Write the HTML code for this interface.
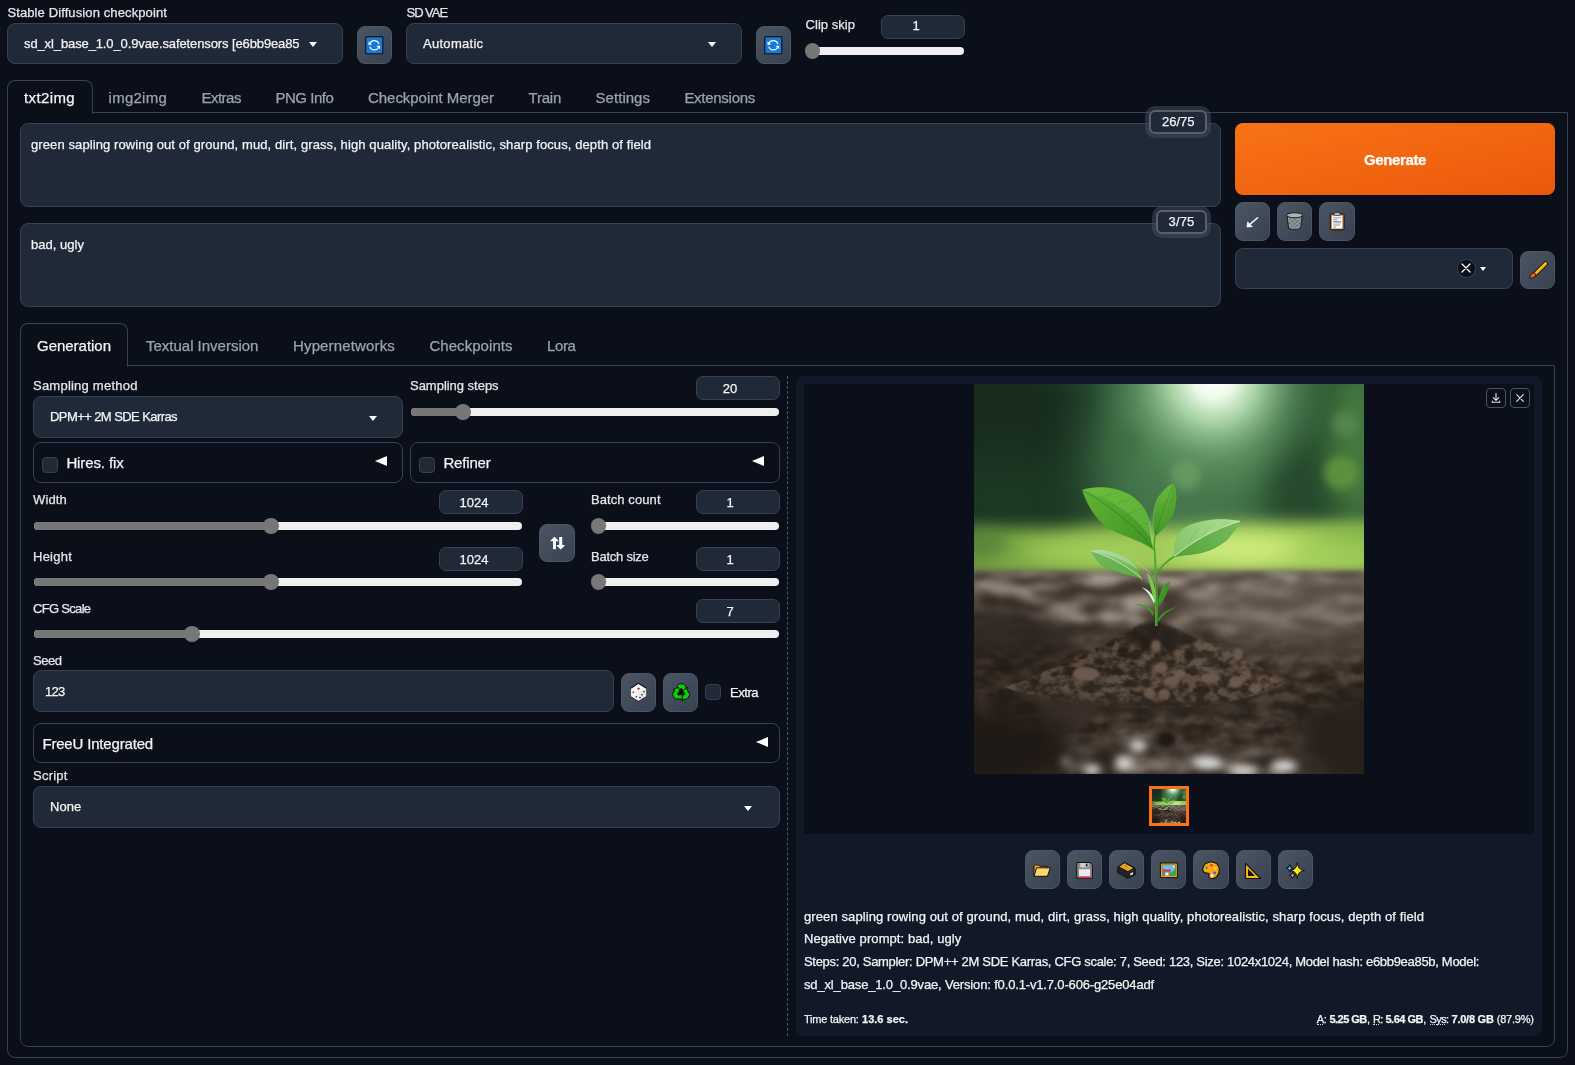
<!DOCTYPE html>
<html><head><meta charset="utf-8"><title>Stable Diffusion</title>
<style>
*{box-sizing:border-box;margin:0;padding:0}
html,body{width:1575px;height:1065px;overflow:hidden;background:#0b0f19;font-family:"Liberation Sans",sans-serif;}
body{position:relative}
.a{position:absolute}
.t{position:absolute;white-space:pre;font-family:"Liberation Sans",sans-serif;-webkit-text-stroke:0.25px currentColor;}
.tl{position:absolute;left:0;top:0;width:1575px;height:1065px;will-change:transform}
.box{position:absolute;background:#1f2937;border:1px solid #374151;border-radius:8px}
.acc{position:absolute;background:#0b0f19;border:1px solid #374151;border-radius:8px}
.num{position:absolute;background:#1f2937;border:1px solid #374151;border-radius:7px}
.btn{position:absolute;border-radius:8px;background:linear-gradient(to bottom right,#4b5563,#374151);border:1px solid #4b5563}
.trk{position:absolute;height:8px;border-radius:4px;background:#efefef}
.fil{position:absolute;height:8px;border-radius:4px;background:#777}
.thm{position:absolute;width:15.6px;height:15.6px;margin:-0.3px 0 0 -0.3px;border-radius:50%;background:#777}
.chk{position:absolute;width:16px;height:16px;border-radius:4px;background:#1f2937;border:1px solid #374151}
.tri{position:absolute;width:0;height:0;border-left:4px solid transparent;border-right:4px solid transparent;border-top:5px solid #fff}
.ltri{position:absolute;width:0;height:0;border-top:5.8px solid transparent;border-bottom:5.8px solid transparent;border-right:12.4px solid #fff}

</style></head>
<body>
<!-- outer tab panel -->
<div class="a" style="left:7px;top:112px;width:1561px;height:946px;border:1px solid #374151;border-radius:0 0 8px 8px"></div>
<!-- txt2img tab -->
<div class="a" style="left:7px;top:80px;width:86px;height:34px;border:1px solid #374151;border-bottom:none;border-radius:8px 8px 0 0;background:#0b0f19"></div>
<!-- inner tab panel -->
<div class="a" style="left:20px;top:365px;width:1535px;height:682px;border:1px solid #374151;border-radius:0 0 8px 8px"></div>
<div class="a" style="left:20px;top:323px;width:108px;height:44px;border:1px solid #374151;border-bottom:none;border-radius:8px 8px 0 0;background:#0b0f19"></div>

<!-- top row -->
<div class="box" style="left:7px;top:23px;width:336px;height:41px"></div>
<div class="tri" style="left:309px;top:42px"></div>
<div class="btn" style="left:357px;top:26px;width:35px;height:38px"></div>
<div class="box" style="left:406px;top:23px;width:336px;height:41px"></div>
<div class="tri" style="left:708px;top:42px"></div>
<div class="btn" style="left:756px;top:26px;width:35px;height:38px"></div>
<div class="num" style="left:881px;top:15px;width:84px;height:24px"></div>
<div class="trk" style="left:806px;top:47px;width:158px"></div>
<div class="thm" style="left:805px;top:43.5px"></div>

<!-- prompts -->
<div class="box" style="left:20px;top:123px;width:1201px;height:84px"></div>
<div class="box" style="left:20px;top:223px;width:1201px;height:84px"></div>
<div class="a" style="left:1149px;top:109.5px;width:58px;height:24px;border:2px solid #566070;border-radius:6px;background:#1f2937;box-shadow:0 0 0 4px rgba(75,85,99,.45)"></div>
<div class="a" style="left:1156px;top:209.5px;width:51px;height:24px;border:2px solid #566070;border-radius:6px;background:#1f2937;box-shadow:0 0 0 4px rgba(75,85,99,.45)"></div>

<!-- generate -->
<div class="a" style="left:1235px;top:123px;width:320px;height:72px;border-radius:8px;background:linear-gradient(to bottom right,#f97316,#ea580c)"></div>
<div class="btn" style="left:1235px;top:202px;width:35px;height:39px"></div>
<div class="btn" style="left:1277px;top:202px;width:35px;height:39px"></div>
<div class="btn" style="left:1319px;top:202px;width:36px;height:39px"></div>
<div class="box" style="left:1235px;top:248px;width:278px;height:41px"></div>
<div class="a" style="left:1456.5px;top:258.5px;width:19px;height:19px;border-radius:50%;background:#0b0f19;border:1px solid #374151"></div>
<div class="tri" style="left:1480px;top:266.5px;border-left-width:3.7px;border-right-width:3.7px;border-top-width:4.5px"></div>
<div class="btn" style="left:1520px;top:251px;width:35px;height:38px"></div>

<!-- left column -->
<div class="box" style="left:33px;top:396px;width:370px;height:42px"></div>
<div class="tri" style="left:369px;top:415.5px"></div>
<div class="trk" style="left:411px;top:408px;width:368px"></div>
<div class="fil" style="left:411px;top:408px;width:54px"></div>
<div class="thm" style="left:455.5px;top:404.5px"></div>
<div class="num" style="left:696px;top:376px;width:84px;height:24px"></div>

<div class="acc" style="left:33px;top:442px;width:370px;height:41px"></div>
<div class="chk" style="left:42px;top:457px"></div>
<div class="ltri" style="left:375px;top:456px"></div>
<div class="acc" style="left:410px;top:442px;width:370px;height:41px"></div>
<div class="chk" style="left:419px;top:457px"></div>
<div class="ltri" style="left:752px;top:456px"></div>

<div class="num" style="left:439px;top:490px;width:84px;height:24px"></div>
<div class="trk" style="left:34px;top:522px;width:488px"></div>
<div class="fil" style="left:34px;top:522px;width:240px"></div>
<div class="thm" style="left:263.5px;top:518.5px"></div>
<div class="num" style="left:439px;top:547px;width:84px;height:24px"></div>
<div class="trk" style="left:34px;top:578px;width:488px"></div>
<div class="fil" style="left:34px;top:578px;width:240px"></div>
<div class="thm" style="left:263.5px;top:574.5px"></div>
<div class="btn" style="left:539px;top:524px;width:36px;height:38px"></div>

<div class="num" style="left:696px;top:490px;width:84px;height:24px"></div>
<div class="trk" style="left:592px;top:522px;width:187px"></div>
<div class="thm" style="left:591px;top:518.5px"></div>
<div class="num" style="left:696px;top:547px;width:84px;height:24px"></div>
<div class="trk" style="left:592px;top:578px;width:187px"></div>
<div class="thm" style="left:591px;top:574.5px"></div>

<div class="num" style="left:696px;top:599px;width:84px;height:24px"></div>
<div class="trk" style="left:34px;top:630px;width:745px"></div>
<div class="fil" style="left:34px;top:630px;width:160px"></div>
<div class="thm" style="left:184.5px;top:626.5px"></div>

<div class="box" style="left:33px;top:670px;width:581px;height:42px"></div>
<div class="btn" style="left:621px;top:673px;width:35px;height:39px"></div>
<div class="btn" style="left:663px;top:673px;width:35px;height:39px"></div>
<div class="chk" style="left:705px;top:684px"></div>

<div class="acc" style="left:33px;top:723px;width:747px;height:40px"></div>
<div class="ltri" style="left:756px;top:737px"></div>
<div class="box" style="left:33px;top:786px;width:747px;height:42px"></div>
<div class="tri" style="left:744px;top:805.5px"></div>

<!-- dashed divider -->
<div class="a" style="left:787px;top:376px;width:0;height:660px;border-left:1px dashed #4b5563"></div>

<!-- results panel -->
<div class="a" style="left:796px;top:376px;width:746px;height:660px;border-radius:8px;background:#111827"></div>
<div class="a" style="left:804px;top:384px;width:730px;height:450px;background:#0b0f19"></div>
<div class="a" style="left:1486px;top:388px;width:20px;height:20px;border:1px solid #4b5563;border-radius:4px"></div>
<div class="a" style="left:1510px;top:388px;width:20px;height:20px;border:1px solid #4b5563;border-radius:4px"></div>
<!-- tool buttons -->
<div class="btn" style="left:1025px;top:850px;width:35px;height:39px"></div>
<div class="btn" style="left:1067px;top:850px;width:35px;height:39px"></div>
<div class="btn" style="left:1109px;top:850px;width:35px;height:39px"></div>
<div class="btn" style="left:1151px;top:850px;width:35px;height:39px"></div>
<div class="btn" style="left:1193px;top:850px;width:36px;height:39px"></div>
<div class="btn" style="left:1236px;top:850px;width:35px;height:39px"></div>
<div class="btn" style="left:1278px;top:850px;width:35px;height:39px"></div>

<svg width="0" height="0" style="position:absolute">
<defs>
<filter id="bl40" filterUnits="userSpaceOnUse" x="-120" y="-120" width="630" height="630" color-interpolation-filters="sRGB"><feGaussianBlur stdDeviation="28"/></filter>
<filter id="bl20" filterUnits="userSpaceOnUse" x="-120" y="-120" width="630" height="630" color-interpolation-filters="sRGB"><feGaussianBlur stdDeviation="14"/></filter>
<filter id="bl10" filterUnits="userSpaceOnUse" x="-120" y="-120" width="630" height="630" color-interpolation-filters="sRGB"><feGaussianBlur stdDeviation="8"/></filter>
<filter id="bl5" filterUnits="userSpaceOnUse" x="-120" y="-120" width="630" height="630" color-interpolation-filters="sRGB"><feGaussianBlur stdDeviation="4"/></filter>
<filter id="bl2" filterUnits="userSpaceOnUse" x="-120" y="-120" width="630" height="630" color-interpolation-filters="sRGB"><feGaussianBlur stdDeviation="2"/></filter>
<filter id="bl1" filterUnits="userSpaceOnUse" x="-120" y="-120" width="630" height="630" color-interpolation-filters="sRGB"><feGaussianBlur stdDeviation="0.9"/></filter>
<radialGradient id="glow" cx="240" cy="-6" r="125" gradientUnits="userSpaceOnUse">
 <stop offset="0" stop-color="#ffffff"/><stop offset="0.16" stop-color="#eefbea"/><stop offset="0.36" stop-color="#b9e2b4" stop-opacity=".85"/><stop offset="0.65" stop-color="#7fb57f" stop-opacity=".4"/><stop offset="1" stop-color="#4f8a55" stop-opacity="0"/></radialGradient>
<linearGradient id="soil" x1="0" y1="186" x2="0" y2="390" gradientUnits="userSpaceOnUse">
 <stop offset="0" stop-color="#746a61"/><stop offset="0.2" stop-color="#5d5148"/><stop offset="0.55" stop-color="#3a2f28"/><stop offset="1" stop-color="#2a221d"/></linearGradient>
<linearGradient id="band" x1="0" y1="0" x2="390" y2="0" gradientUnits="userSpaceOnUse">
 <stop offset="0" stop-color="#6f9c40"/><stop offset="0.3" stop-color="#93c150"/><stop offset="0.7" stop-color="#b4da66"/><stop offset="1" stop-color="#9bc755"/></linearGradient>
<linearGradient id="lfA" x1="108" y1="106" x2="180" y2="160" gradientUnits="userSpaceOnUse"><stop offset="0" stop-color="#62b432"/><stop offset="1" stop-color="#3f9425"/></linearGradient>
<linearGradient id="lfB" x1="200" y1="170" x2="266" y2="137" gradientUnits="userSpaceOnUse"><stop offset="0" stop-color="#5aa93a"/><stop offset="0.6" stop-color="#8ccb6c"/><stop offset="1" stop-color="#a5d88a"/></linearGradient>
<linearGradient id="lfC" x1="117" y1="166" x2="168" y2="193" gradientUnits="userSpaceOnUse"><stop offset="0" stop-color="#a4d490"/><stop offset="1" stop-color="#5fae44"/></linearGradient>
<linearGradient id="lfD" x1="199" y1="99" x2="182" y2="150" gradientUnits="userSpaceOnUse"><stop offset="0" stop-color="#6dbb3e"/><stop offset="1" stop-color="#3f9427"/></linearGradient>
<filter id="soilFar" x="0" y="0" width="100%" height="100%" color-interpolation-filters="sRGB">
 <feTurbulence type="fractalNoise" baseFrequency="0.028 0.075" numOctaves="2" seed="11"/>
 <feColorMatrix type="matrix" values="3 0 0 0 -1  3 0 0 0 -1  3 0 0 0 -1  0 0 0 0 1"/>
 <feComponentTransfer><feFuncR type="table" tableValues="0.20 0.29 0.40 0.52 0.68"/><feFuncG type="table" tableValues="0.165 0.245 0.35 0.47 0.63"/><feFuncB type="table" tableValues="0.14 0.21 0.31 0.43 0.59"/></feComponentTransfer>
 <feGaussianBlur stdDeviation="3"/>
</filter>
<filter id="soilNear" x="0" y="0" width="100%" height="100%" color-interpolation-filters="sRGB">
 <feTurbulence type="fractalNoise" baseFrequency="0.05 0.10" numOctaves="4" seed="5"/>
 <feColorMatrix type="matrix" values="2.4 0 0 0 -0.7  2.4 0 0 0 -0.7  2.4 0 0 0 -0.7  0 0 0 0 1"/>
 <feComponentTransfer><feFuncR type="table" tableValues="0.11 0.155 0.21 0.275 0.35"/><feFuncG type="table" tableValues="0.088 0.124 0.168 0.222 0.29"/><feFuncB type="table" tableValues="0.07 0.098 0.135 0.18 0.24"/></feComponentTransfer>
 <feGaussianBlur stdDeviation="0.9"/>
</filter>
<filter id="soilMound" x="0" y="0" width="100%" height="100%" color-interpolation-filters="sRGB">
 <feTurbulence type="fractalNoise" baseFrequency="0.09 0.12" numOctaves="4" seed="21" result="n"/>
 <feColorMatrix in="n" type="matrix" values="3 0 0 0 -1  3 0 0 0 -1  3 0 0 0 -1  0 0 0 0 1"/>
 <feComponentTransfer><feFuncR type="table" tableValues="0.14 0.20 0.28 0.36 0.44"/><feFuncG type="table" tableValues="0.11 0.16 0.23 0.30 0.37"/><feFuncB type="table" tableValues="0.085 0.13 0.185 0.25 0.31"/></feComponentTransfer>
 <feGaussianBlur stdDeviation="0.5" result="c"/>
 <feComposite in="c" in2="SourceGraphic" operator="in"/>
</filter>
<linearGradient id="gFar" x1="0" y1="184" x2="0" y2="390" gradientUnits="userSpaceOnUse"><stop offset="0" stop-color="#fff" stop-opacity="0"/><stop offset="0.05" stop-color="#fff" stop-opacity=".85"/><stop offset="0.24" stop-color="#fff" stop-opacity=".8"/><stop offset="0.42" stop-color="#fff" stop-opacity="0.1"/><stop offset="0.8" stop-color="#fff" stop-opacity="0.5"/><stop offset="1" stop-color="#fff" stop-opacity=".8"/></linearGradient>
<linearGradient id="gNear" x1="0" y1="184" x2="0" y2="390" gradientUnits="userSpaceOnUse"><stop offset="0" stop-color="#fff" stop-opacity="0"/><stop offset="0.25" stop-color="#fff" stop-opacity="0"/><stop offset="0.45" stop-color="#fff" stop-opacity=".85"/><stop offset="0.75" stop-color="#fff" stop-opacity=".7"/><stop offset="1" stop-color="#fff" stop-opacity="0"/></linearGradient>
<mask id="mFar" maskUnits="userSpaceOnUse" x="0" y="184" width="390" height="206"><rect x="0" y="184" width="390" height="206" fill="url(#gFar)"/></mask>
<mask id="mNear" maskUnits="userSpaceOnUse" x="0" y="184" width="390" height="206"><rect x="0" y="184" width="390" height="206" fill="url(#gNear)"/></mask>
<clipPath id="pc"><rect width="390" height="390"/></clipPath>
<symbol id="pic" viewBox="0 0 390 390">
<g clip-path="url(#pc)">
 <rect width="390" height="200" fill="#2a5332"/>
 <ellipse cx="20" cy="70" rx="110" ry="140" fill="#182c1e" filter="url(#bl40)"/>
 <ellipse cx="40" cy="120" rx="90" ry="50" fill="#1d3a24" filter="url(#bl40)"/>
 <ellipse cx="215" cy="80" rx="95" ry="100" fill="#46794d" filter="url(#bl40)"/>
 <ellipse cx="330" cy="120" rx="35" ry="70" fill="#274a2d" filter="url(#bl20)"/>
 <ellipse cx="385" cy="60" rx="30" ry="80" fill="#45783f" filter="url(#bl20)"/>
 <rect x="90" y="-20" width="300" height="170" fill="url(#glow)"/>
 <circle cx="371" cy="40" r="13" fill="#5b8d56" opacity=".7" filter="url(#bl5)"/>
 <circle cx="367" cy="89" r="17" fill="#65993f" opacity=".8" filter="url(#bl5)"/>
 <circle cx="212" cy="91" r="15" fill="#6fa267" opacity=".7" filter="url(#bl5)"/>
 <circle cx="150" cy="60" r="18" fill="#3a6a41" opacity=".6" filter="url(#bl10)"/>
 <!-- green band -->
 <path d="M-20 150 C20 140 60 146 100 143 C150 139 190 147 230 141 C280 136 330 140 410 138 L410 190 L-20 190Z" fill="url(#band)" filter="url(#bl10)"/>
 <rect x="-20" y="158" width="430" height="30" fill="url(#band)" filter="url(#bl5)"/>
 <ellipse cx="262" cy="165" rx="60" ry="10" fill="#d6f084" opacity=".85" filter="url(#bl10)"/>
 <ellipse cx="110" cy="168" rx="60" ry="9" fill="#abd45e" opacity=".7" filter="url(#bl10)"/>
 <ellipse cx="0" cy="158" rx="34" ry="16" fill="#55823a" opacity=".85" filter="url(#bl10)"/>
 <ellipse cx="380" cy="150" rx="40" ry="8" fill="#7fb04a" opacity=".6" filter="url(#bl10)"/>
 <!-- soil -->
 <rect x="-20" y="187" width="430" height="224" fill="url(#soil)" filter="url(#bl5)"/>
 <rect x="0" y="184" width="390" height="206" filter="url(#soilFar)" mask="url(#mFar)"/>
 <rect x="0" y="184" width="390" height="206" filter="url(#soilNear)" mask="url(#mNear)"/>
 <ellipse cx="310" cy="218" rx="110" ry="26" fill="#7a6f66" opacity=".45" filter="url(#bl10)"/>
 <ellipse cx="40" cy="250" rx="60" ry="24" fill="#2a221c" opacity=".55" filter="url(#bl10)"/>
 <ellipse cx="350" cy="265" rx="40" ry="16" fill="#3a3029" opacity=".5" filter="url(#bl10)"/>
 <ellipse cx="20" cy="300" rx="90" ry="90" fill="#241d18" opacity=".45" filter="url(#bl20)"/>
 <ellipse cx="330" cy="250" rx="80" ry="40" fill="#6a5d53" opacity=".35" filter="url(#bl20)"/>
 <!-- mound -->
 <g filter="url(#bl1)">
 <path d="M30 303 C70 292 100 270 128 262 C140 254 150 250 158 246 C166 240 174 238 181 237 C190 238 196 242 204 246 C214 250 224 256 238 260 C262 270 285 285 318 298 C270 318 230 324 185 324 C130 324 70 318 30 303Z" fill="#463a31"/>
 <path d="M181 237 C190 238 196 242 204 246 C214 250 224 256 238 260 C262 270 285 285 318 298 C285 302 250 298 222 288 C204 278 190 262 181 237Z" fill="#574a40" opacity=".8"/>
 <path d="M181 237 C172 240 164 244 156 248 C146 252 138 256 128 262 C104 270 80 288 50 300 C90 304 125 300 148 290 C164 280 176 262 181 237Z" fill="#352b24" opacity=".8"/>
 </g>
 <path d="M30 303 C70 292 100 270 128 262 C140 254 150 250 158 246 C166 240 174 238 181 237 C190 238 196 242 204 246 C214 250 224 256 238 260 C262 270 285 285 318 298 C270 318 230 324 185 324 C130 324 70 318 30 303Z" filter="url(#soilMound)" opacity=".6"/>
 <path d="M181 236.500 C190 238 196 242 204 246 C210 249 216 252 222 255 C214 262 200 266 186 266 C170 266 156 260 146 253 C150 250 154 248 158 246 C166 240 174 238 181 236.500Z" fill="#261f1a" opacity=".85" filter="url(#bl2)"/>
 <g filter="url(#bl1)" fill="#6a594c">
  <ellipse cx="187" cy="284" rx="7" ry="5"/><ellipse cx="198" cy="297" rx="8" ry="5"/><ellipse cx="176" cy="310" rx="6" ry="5"/><ellipse cx="190" cy="311" rx="6" ry="6"/>
  <ellipse cx="206" cy="290" rx="6" ry="5"/><ellipse cx="236" cy="294" rx="10" ry="5"/><ellipse cx="112" cy="290" rx="13" ry="7"/><ellipse cx="262" cy="298" rx="7" ry="6"/>
  <ellipse cx="182" cy="262" rx="5" ry="6"/><ellipse cx="264" cy="270" rx="5" ry="6"/><ellipse cx="282" cy="305" rx="6" ry="4"/>
 </g>
 <g filter="url(#bl1)" fill="#261e19" opacity=".8">
  <ellipse cx="170" cy="262" rx="3.500" ry="8" transform="rotate(15 170 262)"/><ellipse cx="196" cy="266" rx="3.500" ry="7" transform="rotate(-15 196 266)"/><ellipse cx="215" cy="272" rx="4" ry="6" transform="rotate(-20 215 272)"/><ellipse cx="148" cy="268" rx="4" ry="6" transform="rotate(25 148 268)"/>
  <ellipse cx="228" cy="306" rx="9" ry="3.500"/><ellipse cx="158" cy="300" rx="8" ry="4"/><ellipse cx="250" cy="282" rx="6" ry="3"/><ellipse cx="125" cy="278" rx="6" ry="3"/>
  <ellipse cx="196" cy="320" rx="14" ry="3"/>
 </g>
 <ellipse cx="180" cy="324" rx="120" ry="7" fill="#2e2620" opacity=".7" filter="url(#bl5)"/>
 <!-- foreground -->
 <ellipse cx="95" cy="328" rx="32" ry="15" fill="#3c312a" opacity=".8" filter="url(#bl5)"/>
 <ellipse cx="20" cy="368" rx="80" ry="42" fill="#1f1915" filter="url(#bl20)"/>
 <ellipse cx="375" cy="358" rx="55" ry="48" fill="#27201b" filter="url(#bl20)"/>
 <ellipse cx="193" cy="355" rx="9" ry="8" fill="#1f1915" filter="url(#bl2)"/>
 <ellipse cx="130" cy="374" rx="12" ry="10" fill="#2a231d" filter="url(#bl5)"/>
 <g filter="url(#bl5)" fill="#e0e0e0">
  <ellipse cx="164" cy="362" rx="8" ry="6"/><ellipse cx="150" cy="379" rx="9" ry="6"/><ellipse cx="233" cy="379" rx="15" ry="6"/>
  <ellipse cx="310" cy="382" rx="13" ry="6"/><ellipse cx="270" cy="387" rx="14" ry="5"/><ellipse cx="118" cy="386" rx="9" ry="5"/><ellipse cx="92" cy="377" rx="5" ry="4" opacity=".6"/>
 </g>
 <!-- plant -->
 <g>
  <!-- stem -->
  <path d="M181 242 C181.200 225 181.300 205 180.600 188 C180.300 178 180 170 179.500 164 L181.300 164 C182 172 182.600 180 183 190 C183.600 206 183.800 226 183.600 242Z" fill="#52ad2c"/>
  <path d="M182.600 242 C182.800 225 182.800 205 182.200 188" stroke="#3a8f22" stroke-width="0.900" fill="none"/>
  <!-- petiole right -->
  <path d="M182.500 189.500 C187 183 193 177 200 172.500" stroke="#4a9d31" stroke-width="1.700" fill="none" stroke-linecap="round"/>
  <!-- petiole top -->
  <path d="M180.300 166 C180.200 160 180.300 156 181 152" stroke="#4a9d31" stroke-width="1.500" fill="none"/>
  <!-- big left leaf -->
  <path d="M179.300 166 C176 163 173 161.500 169 159.500 C160 155 147 151 136 145 C125 139 114 124 108 106 C117 103 127 102.500 136 104 C146 105.500 154 109 160 113.500 C168 120 173 127 175 135 C176.500 142 176.200 150 177.500 156 C178 160 178.800 163 179.300 166Z" fill="url(#lfA)"/>
  <path d="M108 106 C117 103 127 102.500 136 104 C146 105.500 154 109 160 113.500 C168 120 173 127 175 135 C176.500 142 176.200 150 177 155 C165 135 140 115 108 106Z" fill="#78c648" opacity=".5"/>
  <path d="M108 106 C130 118 158 138 178.500 164" stroke="#2c7a1c" stroke-width="0.900" fill="none" opacity=".75"/>
  <path d="M125 115 C130 112 136 110 142 109 M138 123 C144 119 150 116 157 115 M150 133 C156 129 162 126 168 125 M160 144 C165 141 170 139 175 139 M122 118 C123 124 125 130 128 135 M136 126 C137 133 140 139 144 144 M150 136 C152 142 155 147 159 151" stroke="#3e8f27" stroke-width="0.500" fill="none" opacity=".6"/>
  <path d="M175.500 137 C176.800 144 176.500 152 178.300 160" stroke="#a8e08a" stroke-width="0.800" fill="none" opacity=".8"/>
  <!-- top leaf -->
  <path d="M180.600 153 C179.500 148 178.800 142 179 136 C179.300 128 181 119 185.500 111.500 C189 106 194 101.500 199.700 99 C202 104 202.800 111 202 118 C201 125 199.500 129 198 132.500 C195 139 190 144 186 148 C184 150 182 151.500 180.600 153Z" fill="url(#lfD)"/>
  <path d="M199.700 99 C202 104 202.800 111 202 118 C201 125 199.500 129 198 132.500 C195 139 190 144 186 148 C192 132 196 116 199.700 99Z" fill="#4b9e2a" opacity=".55"/>
  <path d="M199.500 99.500 C193 116 186 136 181 152" stroke="#2f7d1e" stroke-width="0.700" fill="none" opacity=".7"/>
  <path d="M180.600 153 C179.500 148 178.800 142 179 136 C179.300 128 181 119 185.500 111.500" stroke="#9ad67a" stroke-width="0.600" fill="none" opacity=".7"/>
  <!-- right leaf -->
  <path d="M199.700 173 C199.500 166 200 160 202 154.500 C205 147 210 143 217 140.500 C224 138 232 136 240 135.500 C249 135 258 135.800 266.400 137 C264 143 260 148 255.500 153 C251 158 246 161 239.500 164.500 C233 167.500 227 169 220.500 170 C213 171 206 171.500 199.700 173Z" fill="url(#lfB)"/>
  <path d="M199.700 173 C199.500 166 200 160 202 154.500 C205 147 210 143 217 140.500 C224 138 232 136 240 135.500 C249 135 258 135.800 266.400 137 C245 143 222 155 199.700 173Z" fill="#b9e2a4" opacity=".45"/>
  <path d="M199.700 173 C222 155 245 143 266.400 137 C264 143 260 148 255.500 153 C251 158 246 161 239.500 164.500 C233 167.500 227 169 220.500 170 C213 171 206 171.500 199.700 173Z" fill="#4f9f35" opacity=".55"/>
  <path d="M200 172.500 C220 156 245 143 266 137.200" stroke="#eaf7e2" stroke-width="0.800" fill="none" opacity=".9"/>
  <path d="M215 161 C217 155 220 149 225 144 M228 154 C231 148 235 143 241 139 M243 147 C246 143 250 140 255 138.500 M214 163 C222 164 230 163 238 160 M230 153 C238 154 245 152 251 149" stroke="#5fa845" stroke-width="0.500" fill="none" opacity=".6"/>
  <path d="M199.700 173 C206 171.500 213 171 220.500 170 C227 169 233 167.500 239.500 164.500 C246 161 251 158 255.500 153" stroke="#4f9a36" stroke-width="0.700" fill="none" opacity=".7"/>
  <!-- lower left leaf -->
  <path d="M179.500 201 C176 198.500 172 197 168.600 195.300 C165 193.500 162 192.800 159 192 C153 190.600 148 189.800 143.500 188 C137 185.500 131 182.500 126.300 180 C122 177 119 172 116.700 166.600 C123 165.500 130 166 136 167.400 C143 169 150 172 155 175.400 C159 178.500 162 182 163.500 185.500 C165 189 167 192.500 168.600 195.300" fill="url(#lfC)"/>
  <path d="M116.700 166.600 C123 165.500 130 166 136 167.400 C143 169 150 172 155 175.400 C159 178.500 162 182 163.500 185.500 C150 176 135 170 116.700 166.600Z" fill="#c9e8bb" opacity=".5"/>
  <path d="M116.700 166.600 C135 172 155 183 168.600 195.300 C165 193.500 162 192.800 159 192 C153 190.600 148 189.800 143.500 188 C137 185.500 131 182.500 126.300 180 C122 177 119 172 116.700 166.600Z" fill="#58a53f" opacity=".6"/>
  <path d="M117 166.800 C135 172 155 183 168.500 195" stroke="#edf8e6" stroke-width="0.700" fill="none" opacity=".85"/>
  <path d="M126.300 180 C131 182.500 137 185.500 143.500 188 C148 189.800 153 190.600 159 192 C162 192.800 165 193.500 168.600 195.300" stroke="#4c9a34" stroke-width="0.700" fill="none" opacity=".7"/>
  <!-- sheath -->
  <path d="M180.500 218 C178 208 175.500 198 172.600 188.500 C175 190 178 195 180 201 C181.500 206 182 212 182 218Z" fill="#7cc653"/>
  <path d="M162.200 177.700 C167 181 172 185 176.600 189.700" stroke="#b7dc8f" stroke-width="0.700" fill="none" opacity=".9"/>
  <!-- mid right leaf -->
  <path d="M184.800 222 C184.300 214 186 207 189.500 202 C191.500 199.800 193.500 198.500 195.700 197.700 C195 203 193.300 208.500 191 213 C189.300 216.500 187 219.500 184.800 222Z" fill="#3f9a25"/>
  <path d="M195.700 197.700 C192 205 188 214 184.800 222" stroke="#2b7a1a" stroke-width="0.500" fill="none"/>
  <!-- whitish leaf -->
  <path d="M179.300 219 C177.500 213.500 173.500 207.500 167.800 203.300 C172 204.500 176 207.500 178.500 211.500 C180 214 180.300 216.500 180.500 219Z" fill="#e2f3da"/>
  <path d="M179.300 222 C177.500 217 175.500 214 173 212 C176 213.500 178.500 216 180.300 220Z" fill="#3f9a25"/>
  <!-- small left -->
  <path d="M179.300 227.500 C175.500 222.500 168 219.500 159 220 C165 220.500 170.500 222.500 174.500 226 C176.500 227.800 178 230 179.300 232.500Z" fill="#3d9823"/>
  <!-- small right -->
  <path d="M184 234.500 C188 228.500 195 224.500 202.600 223.200 C197 225.500 192.500 228.500 189 232 C187 234 185.500 236 184.300 238Z" fill="#3a9322"/>
 </g>
</g>
</symbol>
</defs></svg>
<svg class="a" style="left:974px;top:384px" width="390" height="390" viewBox="0 0 390 390"><use href="#pic" width="390" height="390"/></svg>
<div class="a" style="left:1149px;top:786px;width:40px;height:40px;background:#f97316"></div>
<svg class="a" style="left:1152px;top:789px" width="34" height="34" viewBox="0 0 390 390"><use href="#pic" width="390" height="390"/></svg>

<svg class="a" style="left:0;top:0;pointer-events:none" width="1575" height="1065" viewBox="0 0 1575 1065">
<defs>
 <g id="refresh">
  <rect x="-9" y="-9" width="18" height="18" rx="1" fill="#0a0a0a"/>
  <rect x="-8" y="-8" width="16" height="16" fill="#1979d9"/>
  <path d="M-4.500 -1.300 A4.700 4.700 0 0 1 4.500 -1.300" fill="none" stroke="#fff" stroke-width="1.150"/>
  <path d="M4.500 1.300 A4.700 4.700 0 0 1 -4.500 1.300" fill="none" stroke="#fff" stroke-width="1.150"/>
  <path d="M-5.800 -3.800 L-5.800 -0.200 L-2.200 -0.800Z" fill="#fff"/>
  <path d="M5.800 3.800 L5.800 0.200 L2.200 0.800Z" fill="#fff"/>
 </g>
</defs>
<use href="#refresh" transform="translate(374.300 45.300)"/>
<use href="#refresh" transform="translate(773.300 45.300)"/>

<!-- arrow down-left -->
<g stroke="#fff" stroke-width="1.500" stroke-linecap="round" fill="none">
 <path d="M1257.600 217.800 L1248 226"/>
</g>
<path d="M1247 227 L1247.600 221.800 L1249.600 224.200 L1252.400 226.600Z" fill="#fff" stroke="#fff" stroke-width="0.700" stroke-linejoin="round"/>

<!-- trash -->
<g>
 <path d="M1287 215.500 L1302.300 215.500 L1300.600 228.600 Q1294.600 231 1288.700 228.600Z" fill="#8b9a9b" stroke="#15181c" stroke-width="1"/>
 <ellipse cx="1294.650" cy="215.300" rx="8" ry="2.500" fill="#a9b5b6" stroke="#15181c" stroke-width="1"/>
 <g stroke="#4f5a5c" stroke-width="0.600" opacity=".9">
  <path d="M1289 219 L1300.500 228 M1288 222 L1297 229.500 M1292 217.500 L1301 224.500 M1300.500 219 L1289.500 228 M1301.500 222 L1292.500 229.500 M1297.500 217.500 L1288.300 224.500"/>
 </g>
</g>

<!-- clipboard -->
<g>
 <rect x="1330.300" y="214" width="13.700" height="15.800" rx="1" fill="#c98b57" stroke="#17120e" stroke-width="1"/>
 <rect x="1332" y="215.800" width="10.300" height="12.600" fill="#fbfbfb"/>
 <rect x="1334.300" y="212.700" width="5.700" height="2.600" rx="0.800" fill="#d8d8d8" stroke="#17120e" stroke-width="0.700"/>
 <g stroke="#8b8b8b" stroke-width="0.900"><path d="M1333.300 217.800 H1341 M1333.300 219.800 H1337.500 M1333.300 221.400 H1341 M1333.300 222.800 H1341 M1333.300 225 H1340 M1333.300 227 H1336"/></g>
</g>

<!-- X in circle -->
<g stroke="#fff" stroke-width="1.300" stroke-linecap="round"><path d="M1462 264 L1470 272 M1470 264 L1462 272"/></g>

<!-- paintbrush -->
<g>
 <path d="M1545.600 263.600 L1534.600 274.400" stroke="#15110a" stroke-width="4.800" stroke-linecap="round"/>
 <path d="M1545.600 263.600 L1534.800 274.200" stroke="#fdb813" stroke-width="2.900" stroke-linecap="round"/>
 <path d="M1535.600 274.200 C1536 277 1533 278.600 1529.300 278 C1530.800 276.500 1530.500 274.500 1532 273.300 C1533.300 272.400 1535 272.800 1535.600 274.200Z" fill="#e8641b" stroke="#15110a" stroke-width="0.900"/>
</g>

<!-- swap arrows -->
<g fill="#fff">
 <rect x="553" y="539" width="3" height="10.200"/>
 <path d="M550.600 540.600 L554.500 536.700 L558.400 540.600 L558.400 541.300 L550.600 541.300Z"/>
 <rect x="559.200" y="537" width="3" height="10"/>
 <path d="M556.800 545.700 L560.700 549.600 L564.600 545.700 L564.600 545 L556.800 545Z"/>
</g>

<!-- dice -->
<g>
 <path d="M638.500 683.300 L646.300 688.200 L646.300 696.300 L638.500 701 L630.800 696.300 L630.800 688.200Z" fill="#fafafa" stroke="#101010" stroke-width="1.100" stroke-linejoin="round"/>
 <path d="M638.500 692.800 L646.300 688.200 L646.300 696.300 L638.500 701Z" fill="#e6e6e6"/>
 <path d="M638.500 692.800 L630.800 688.200 L630.800 696.300 L638.500 701Z" fill="#f2f2f2"/>
 <ellipse cx="638.500" cy="688.700" rx="1.400" ry="1.100" fill="#dc2a4a"/>
 <g fill="#222"><circle cx="633.300" cy="692.300" r="0.800"/><circle cx="636.300" cy="696.700" r="0.800"/><circle cx="643.900" cy="691.700" r="0.800"/><circle cx="642" cy="694.700" r="0.800"/><circle cx="640" cy="697.600" r="0.800"/></g>
</g>

<!-- recycle -->
<g transform="translate(681.200 692.500) scale(0.860)">
 <path d="M-3.200 2.200 L0 -3.600 L3.200 2.200Z" fill="#050d05" stroke="#050d05" stroke-width="1.500" stroke-linejoin="round"/>
 <g id="rcA" stroke="#051005" stroke-width="1" stroke-linejoin="round" fill="#0ccf0c">
  <path d="M-7.200 -2.600 L-3.300 -9.300 Q-2.800 -10 -1.900 -10 L2.300 -10 Q3.200 -10 3.700 -9.200 L6 -5.300 L7.900 -6.400 L6.600 0.600 L0 -1.900 L1.900 -3 L0.700 -4.500 L-0.900 -4.500 L-2.500 -0.300Z"/>
 </g>
 <use href="#rcA" transform="rotate(120)"/>
 <use href="#rcA" transform="rotate(240)"/>
</g>

<!-- gallery download / close -->
<g stroke="#e5e7eb" stroke-width="1.100" fill="none" stroke-linecap="round" stroke-linejoin="round">
 <path d="M1496 393.300 V400 M1493.200 397.600 L1496 400.400 L1498.800 397.600 M1492.300 401 V402.300 H1499.700 V401"/>
 <path d="M1516.700 394.700 L1523.300 401.300 M1523.300 394.700 L1516.700 401.300"/>
</g>

<!-- folder -->
<g stroke="#15110a" stroke-width="1" stroke-linejoin="round">
 <path d="M1034 876.300 V866.800 Q1034 865 1035.600 865 H1038.600 L1039.800 866.300 H1047.200 V876.300Z" fill="#eeb12c"/>
 <path d="M1034.800 865.400 H1037.300" stroke="#e23b2e" stroke-width="1.400"/>
 <path d="M1034 876.300 L1036.500 867.800 H1050.300 L1047.400 876.300Z" fill="#fdd672"/>
</g>

<!-- floppy -->
<g>
 <path d="M1076.700 862.500 H1090 L1092.400 864.800 V878.200 H1076.700Z" fill="#8a8a8a" stroke="#111" stroke-width="1" stroke-linejoin="round"/>
 <rect x="1080.300" y="863" width="8.300" height="4.400" fill="#cfcfcf"/>
 <rect x="1085.800" y="863.600" width="1.700" height="3" fill="#222"/>
 <rect x="1079" y="869.300" width="11" height="8.400" fill="#f3f3f3"/>
 <path d="M1079 871.300 H1090 M1079 873.200 H1090 M1079 875 H1090" stroke="#dcdcdc" stroke-width="0.600"/>
 <rect x="1079" y="876.300" width="11" height="1.500" fill="#e01563"/>
</g>

<!-- card file box -->
<g stroke="#0b0b0b" stroke-width="0.900" stroke-linejoin="round">
 <path d="M1117.700 867.300 L1124.500 862.300 L1135.200 868.200 L1135.200 874.700 L1127.700 878.300 L1117.700 872.500Z" fill="#242424"/>
 <path d="M1118.600 866.800 L1124.500 862.800 L1134 868 L1127.800 871.600Z" fill="#f3b21d"/>
 <path d="M1122.300 864.800 L1131.300 869.600 M1120.600 866 L1129.500 870.800" stroke="#c8860e" stroke-width="0.700"/>
 <path d="M1124.300 863.600 L1125.600 864.400" stroke="#3fae49" stroke-width="1.200"/>
 <path d="M1125.800 865.600 L1127.100 866.400" stroke="#e94e3c" stroke-width="1.200"/>
 <path d="M1130.300 873.600 L1133 872.300 L1133 874.300 L1130.300 875.600Z" fill="#f2f2f2" stroke="none"/>
</g>

<!-- framed picture -->
<g>
 <rect x="1160.400" y="863" width="17" height="14.600" fill="#e9a91b" stroke="#111" stroke-width="1"/>
 <rect x="1162.300" y="864.900" width="13.200" height="10.800" fill="#6cc1ef" stroke="#7a5a0c" stroke-width="0.500"/>
 <path d="M1168.500 875.700 L1175.500 868.500 V875.700Z" fill="#38a832"/>
 <path d="M1163 875.700 V870.500 L1164.500 868.800 L1166 870 H1168.300 L1169.800 868.800 L1170.600 870.500 V875.700Z" fill="#7c7c80"/>
 <rect x="1163" y="869.700" width="7.600" height="1.400" fill="#e02d2d"/>
 <rect x="1165.300" y="872.500" width="3.200" height="3" fill="#f1f1f1"/>
 <circle cx="1173.800" cy="866.600" r="1" fill="#fff7b0"/>
</g>

<!-- palette -->
<g>
 <path d="M1210.500 862 C1215.500 861.500 1219.500 865 1219.300 870 C1219.200 874.800 1216 878.800 1212 878.700 C1209.200 878.600 1208.300 876.800 1209 875.200 C1209.600 873.700 1208.600 872.800 1206.800 873 C1204 873.300 1202.500 871.300 1202.800 868.600 C1203.300 864.800 1206.500 862.400 1210.500 862Z" fill="#f9a61a" stroke="#111" stroke-width="1.100"/>
 <circle cx="1206.500" cy="867.800" r="1.300" fill="#2fb52f"/><circle cx="1211.400" cy="865.300" r="1.300" fill="#e83a2a"/>
 <circle cx="1215.300" cy="868.300" r="1.300" fill="#f8d21c"/><circle cx="1214.700" cy="872.800" r="1.400" fill="#2a5fe0"/><circle cx="1212" cy="875.600" r="1.300" fill="#fff"/>
</g>

<!-- triangular ruler -->
<g>
 <path d="M1245.500 863.300 L1260.500 878.500 H1245.500Z" fill="#fdb813" stroke="#111" stroke-width="1.100" stroke-linejoin="round"/>
 <path d="M1248 868.800 L1255 876 H1248Z" fill="#111"/>
</g>

<!-- sparkles -->
<g stroke="#111" stroke-width="1" stroke-linejoin="round">
 <path d="M1297.300 862.300 Q1297.700 870.100 1304.600 870.500 Q1297.700 870.900 1297.300 878.700 Q1296.900 870.900 1290 870.500 Q1296.900 870.100 1297.300 862.300Z" fill="#fdea1c"/>
 <path d="M1289.700 864.500 Q1289.900 868.100 1293.300 868.300 Q1289.900 868.500 1289.700 872.100 Q1289.500 868.500 1286.100 868.300 Q1289.500 868.100 1289.700 864.500Z" fill="#3cc4f0"/>
 <path d="M1292.500 872.100 Q1292.700 875.100 1295.600 875.300 Q1292.700 875.500 1292.500 878.500 Q1292.300 875.500 1289.400 875.300 Q1292.300 875.100 1292.500 872.100Z" fill="#f39ac0"/>
</g>
</svg>

<div class="tl">
<span class="t" style="left:7.4px;top:6.20px;font-size:13px;line-height:13px;font-weight:400;color:#e5e7eb;letter-spacing:0.112px;">Stable Diffusion checkpoint</span>
<span class="t" style="left:24.0px;top:37.20px;font-size:13px;line-height:13px;font-weight:400;color:#f3f4f6;letter-spacing:-0.113px;">sd_xl_base_1.0_0.9vae.safetensors [e6bb9ea85</span>
<span class="t" style="left:406.6px;top:6.20px;font-size:13px;line-height:13px;font-weight:400;color:#e5e7eb;letter-spacing:-1.053px;">SD VAE</span>
<span class="t" style="left:423.0px;top:37.20px;font-size:13px;line-height:13px;font-weight:400;color:#f3f4f6;letter-spacing:0.287px;">Automatic</span>
<span class="t" style="left:805.6px;top:18.20px;font-size:13px;line-height:13px;font-weight:400;color:#e5e7eb;letter-spacing:0.031px;">Clip skip</span>
<span class="t" style="left:24.0px;top:89.90px;font-size:15px;line-height:15px;font-weight:400;color:#f3f4f6;letter-spacing:0.377px;">txt2img</span>
<span class="t" style="left:108.6px;top:89.90px;font-size:15px;line-height:15px;font-weight:400;color:#9ca3af;letter-spacing:0.245px;">img2img</span>
<span class="t" style="left:201.4px;top:89.90px;font-size:15px;line-height:15px;font-weight:400;color:#9ca3af;letter-spacing:-0.486px;">Extras</span>
<span class="t" style="left:275.4px;top:89.90px;font-size:15px;line-height:15px;font-weight:400;color:#9ca3af;letter-spacing:-0.463px;">PNG Info</span>
<span class="t" style="left:368.0px;top:89.90px;font-size:15px;line-height:15px;font-weight:400;color:#9ca3af;letter-spacing:-0.043px;">Checkpoint Merger</span>
<span class="t" style="left:528.6px;top:89.90px;font-size:15px;line-height:15px;font-weight:400;color:#9ca3af;letter-spacing:-0.245px;">Train</span>
<span class="t" style="left:595.6px;top:89.90px;font-size:15px;line-height:15px;font-weight:400;color:#9ca3af;letter-spacing:0.025px;">Settings</span>
<span class="t" style="left:684.4px;top:89.90px;font-size:15px;line-height:15px;font-weight:400;color:#9ca3af;letter-spacing:-0.277px;">Extensions</span>
<span class="t" style="left:31.0px;top:137.60px;font-size:13px;line-height:13px;font-weight:400;color:#f3f4f6;letter-spacing:0.100px;">green sapling rowing out of ground, mud, dirt, grass, high quality, photorealistic, sharp focus, depth of field</span>
<span class="t" style="left:31.0px;top:237.60px;font-size:13px;line-height:13px;font-weight:400;color:#f3f4f6;letter-spacing:0.026px;">bad, ugly</span>
<span class="t" style="left:1162.0px;top:115.00px;font-size:13px;line-height:13px;font-weight:400;color:#f3f4f6;letter-spacing:0.011px;">26/75</span>
<span class="t" style="left:1168.6px;top:215.20px;font-size:13px;line-height:13px;font-weight:400;color:#f3f4f6;letter-spacing:0.122px;">3/75</span>
<span class="t" style="left:1364.0px;top:151.90px;font-size:15px;line-height:15px;font-weight:700;color:#ffffff;letter-spacing:-0.381px;">Generate</span>
<span class="t" style="left:37.0px;top:337.90px;font-size:15px;line-height:15px;font-weight:400;color:#f3f4f6;letter-spacing:-0.022px;">Generation</span>
<span class="t" style="left:146.0px;top:337.90px;font-size:15px;line-height:15px;font-weight:400;color:#9ca3af;letter-spacing:-0.010px;">Textual Inversion</span>
<span class="t" style="left:293.0px;top:337.90px;font-size:15px;line-height:15px;font-weight:400;color:#9ca3af;letter-spacing:0.150px;">Hypernetworks</span>
<span class="t" style="left:429.4px;top:337.90px;font-size:15px;line-height:15px;font-weight:400;color:#9ca3af;letter-spacing:0.059px;">Checkpoints</span>
<span class="t" style="left:547.0px;top:337.90px;font-size:15px;line-height:15px;font-weight:400;color:#9ca3af;letter-spacing:-0.358px;">Lora</span>
<span class="t" style="left:33.0px;top:378.60px;font-size:13px;line-height:13px;font-weight:400;color:#e5e7eb;letter-spacing:0.229px;">Sampling method</span>
<span class="t" style="left:50.0px;top:409.60px;font-size:13px;line-height:13px;font-weight:400;color:#f3f4f6;letter-spacing:-0.579px;">DPM++ 2M SDE Karras</span>
<span class="t" style="left:410.0px;top:378.60px;font-size:13px;line-height:13px;font-weight:400;color:#e5e7eb;letter-spacing:-0.021px;">Sampling steps</span>
<span class="t" style="left:66.4px;top:454.90px;font-size:15px;line-height:15px;font-weight:400;color:#f3f4f6;letter-spacing:-0.114px;">Hires. fix</span>
<span class="t" style="left:443.4px;top:454.90px;font-size:15px;line-height:15px;font-weight:400;color:#f3f4f6;letter-spacing:-0.166px;">Refiner</span>
<span class="t" style="left:33.0px;top:492.60px;font-size:13px;line-height:13px;font-weight:400;color:#e5e7eb;letter-spacing:0.153px;">Width</span>
<span class="t" style="left:591.0px;top:492.60px;font-size:13px;line-height:13px;font-weight:400;color:#e5e7eb;letter-spacing:0.086px;">Batch count</span>
<span class="t" style="left:33.0px;top:549.60px;font-size:13px;line-height:13px;font-weight:400;color:#e5e7eb;letter-spacing:0.237px;">Height</span>
<span class="t" style="left:591.0px;top:549.60px;font-size:13px;line-height:13px;font-weight:400;color:#e5e7eb;letter-spacing:-0.238px;">Batch size</span>
<span class="t" style="left:33.0px;top:601.60px;font-size:13px;line-height:13px;font-weight:400;color:#e5e7eb;letter-spacing:-0.686px;">CFG Scale</span>
<span class="t" style="left:33.0px;top:653.60px;font-size:13px;line-height:13px;font-weight:400;color:#e5e7eb;letter-spacing:-0.444px;">Seed</span>
<span class="t" style="left:45.0px;top:685.10px;font-size:13px;line-height:13px;font-weight:400;color:#f3f4f6;letter-spacing:-0.701px;">123</span>
<span class="t" style="left:730.0px;top:685.60px;font-size:13px;line-height:13px;font-weight:400;color:#f3f4f6;letter-spacing:-0.469px;">Extra</span>
<span class="t" style="left:42.4px;top:735.90px;font-size:15px;line-height:15px;font-weight:400;color:#f3f4f6;letter-spacing:-0.175px;">FreeU Integrated</span>
<span class="t" style="left:33.0px;top:768.60px;font-size:13px;line-height:13px;font-weight:400;color:#e5e7eb;letter-spacing:0.228px;">Script</span>
<span class="t" style="left:50.0px;top:799.60px;font-size:13px;line-height:13px;font-weight:400;color:#f3f4f6;letter-spacing:0.080px;">None</span>
<span class="t" style="left:804.0px;top:909.60px;font-size:13px;line-height:13px;font-weight:400;color:#f3f4f6;letter-spacing:0.100px;">green sapling rowing out of ground, mud, dirt, grass, high quality, photorealistic, sharp focus, depth of field</span>
<span class="t" style="left:804.0px;top:932.30px;font-size:13px;line-height:13px;font-weight:400;color:#f3f4f6;letter-spacing:0.078px;">Negative prompt: bad, ugly</span>
<span class="t" style="left:804.0px;top:955.00px;font-size:13px;line-height:13px;font-weight:400;color:#f3f4f6;letter-spacing:-0.306px;">Steps: 20, Sampler: DPM++ 2M SDE Karras, CFG scale: 7, Seed: 123, Size: 1024x1024, Model hash: e6bb9ea85b, Model:</span>
<span class="t" style="left:804.0px;top:977.70px;font-size:13px;line-height:13px;font-weight:400;color:#f3f4f6;letter-spacing:-0.156px;">sd_xl_base_1.0_0.9vae, Version: f0.0.1-v1.7.0-606-g25e04adf</span>
<span class="t" style="left:804.0px;top:1013.99px;font-size:11px;line-height:11px;font-weight:400;color:#f3f4f6;letter-spacing:-0.219px;">Time taken: </span>
<span class="t" style="left:862.0px;top:1013.99px;font-size:11px;line-height:11px;font-weight:700;color:#f3f4f6;letter-spacing:0.014px;">13.6 sec.</span>
<span class="t" style="left:1316.8px;top:1013.89px;font-size:11px;line-height:11px;font-weight:400;color:#f3f4f6;letter-spacing:-0.403px;">A:</span>
<span class="t" style="left:1329.5px;top:1013.89px;font-size:11px;line-height:11px;font-weight:700;color:#f3f4f6;letter-spacing:-0.553px;">5.25 GB</span>
<span class="t" style="left:1366.9px;top:1013.89px;font-size:11px;line-height:11px;font-weight:400;color:#f3f4f6;letter-spacing:-0.763px;">,</span>
<span class="t" style="left:1373.1px;top:1013.89px;font-size:11px;line-height:11px;font-weight:400;color:#f3f4f6;letter-spacing:-0.850px;">R:</span>
<span class="t" style="left:1385.5px;top:1013.89px;font-size:11px;line-height:11px;font-weight:700;color:#f3f4f6;letter-spacing:-0.510px;">5.64 GB</span>
<span class="t" style="left:1423.2px;top:1013.89px;font-size:11px;line-height:11px;font-weight:400;color:#f3f4f6;letter-spacing:-0.763px;">,</span>
<span class="t" style="left:1429.5px;top:1013.89px;font-size:11px;line-height:11px;font-weight:400;color:#f3f4f6;letter-spacing:-0.602px;">Sys:</span>
<span class="t" style="left:1451.6px;top:1013.89px;font-size:11px;line-height:11px;font-weight:700;color:#f3f4f6;letter-spacing:-0.254px;">7.0/8 GB</span>
<span class="t" style="left:1496.7px;top:1013.89px;font-size:11px;line-height:11px;font-weight:400;color:#f3f4f6;letter-spacing:-0.219px;">(87.9%)</span>
<span class="t" style="left:876px;width:80px;text-align:center;top:19.10px;font-size:13px;line-height:13px;color:#f3f4f6">1</span>
<span class="t" style="left:690px;width:80px;text-align:center;top:381.60px;font-size:13px;line-height:13px;color:#f3f4f6">20</span>
<span class="t" style="left:434px;width:80px;text-align:center;top:495.60px;font-size:13px;line-height:13px;color:#f3f4f6">1024</span>
<span class="t" style="left:690px;width:80px;text-align:center;top:495.60px;font-size:13px;line-height:13px;color:#f3f4f6">1</span>
<span class="t" style="left:434px;width:80px;text-align:center;top:552.60px;font-size:13px;line-height:13px;color:#f3f4f6">1024</span>
<span class="t" style="left:690px;width:80px;text-align:center;top:552.60px;font-size:13px;line-height:13px;color:#f3f4f6">1</span>
<span class="t" style="left:690px;width:80px;text-align:center;top:604.60px;font-size:13px;line-height:13px;color:#f3f4f6">7</span>
</div>
<div class="a" style="left:1317px;top:1024px;width:6px;height:0;border-top:1px dotted #d1d5db"></div>
<div class="a" style="left:1373px;top:1024px;width:6px;height:0;border-top:1px dotted #d1d5db"></div>
<div class="a" style="left:1430px;top:1024px;width:15px;height:0;border-top:1px dotted #d1d5db"></div>

</body></html>
